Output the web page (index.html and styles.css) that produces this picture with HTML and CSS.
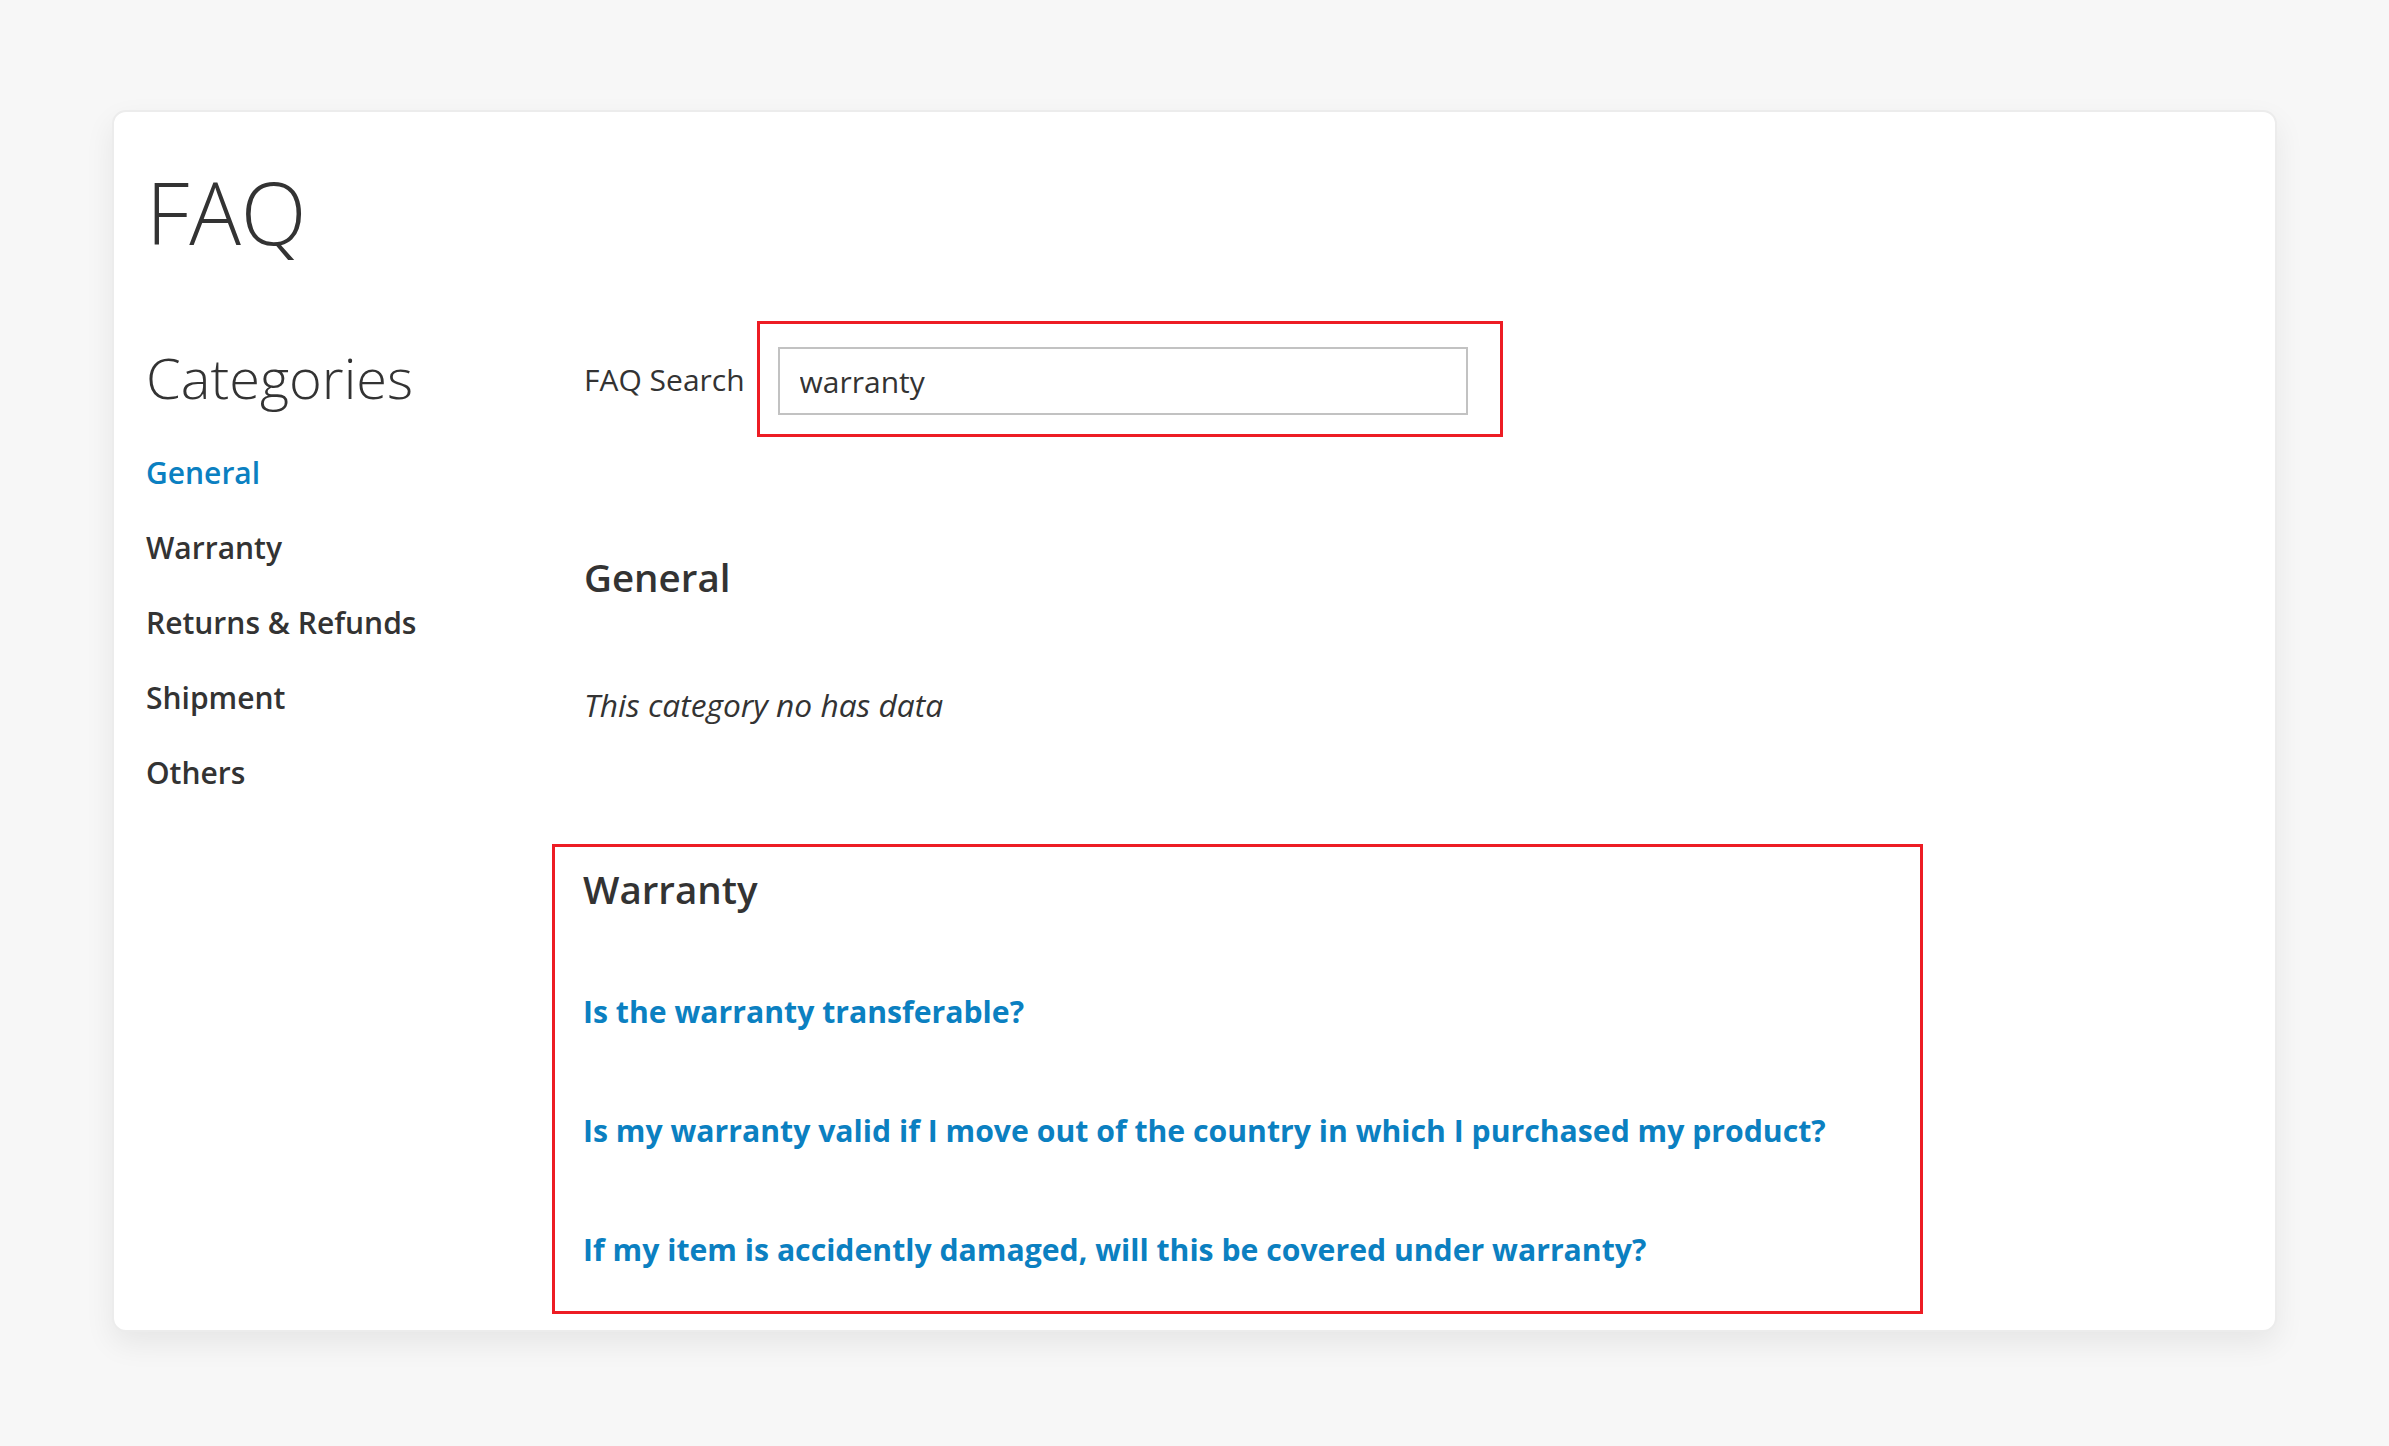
FILE: index.html
```html
<!DOCTYPE html>
<html lang="en">
<head>
  <meta charset="UTF-8">
  <meta name="viewport" content="width=device-width, initial-scale=1.0">
  <title>FAQ</title>
  <link rel="stylesheet" href="styles.css">
</head>
<body>

  <div class="faq-page">
    <h1 class="page-title">FAQ</h1>

    <div class="faq-layout">
      <!-- Sidebar with the category list -->
      <div class="faq-sidebar">
        <h2>Categories</h2>
        <ul class="category-list">
          <li><a class="active" href="#general">General</a></li>
          <li><a href="#warranty">Warranty</a></li>
          <li><a href="#returns">Returns &amp; Refunds</a></li>
          <li><a href="#shipment">Shipment</a></li>
          <li><a href="#others">Others</a></li>
        </ul>
      </div>

      <!-- Search and results -->
      <div class="faq-main">
        <div class="search-row">
          <label for="faqSearch">FAQ Search</label>
          <div class="highlight search-box">
            <input type="text" id="faqSearch" value="warranty">
          </div>
        </div>

        <div class="faq-category" id="general">
          <h3>General</h3>
          <p class="empty">This category no has data</p>
        </div>

        <div class="highlight faq-category results" id="warranty">
          <h3>Warranty</h3>
          <a class="question" href="#">Is the warranty transferable?</a>
          <a class="question" href="#">Is my warranty valid if I move out of the country in which I purchased my product?</a>
          <a class="question" href="#">If my item is accidently damaged, will this be covered under warranty?</a>
        </div>
      </div>
    </div>
  </div>

</body>
</html>
```

FILE: styles.css
```css
body {
  margin: 0;
  padding: 110px 112px 114px;
  background-color: #f7f7f7;
  font-family: "Open Sans", "Liberation Sans", sans-serif;
  color: #333;
}

.faq-page {
  background: white;
  border: 2px solid #ececec;
  border-radius: 14px;
  box-shadow: 0 12px 30px rgba(0, 0, 0, 0.07);
  padding: 53px 32px 16px;
  min-height: 1149px;
}

.page-title {
  margin: 0 0 61px;
  font-size: 86px;
  font-weight: 300;
  line-height: 94.6px;
}

.faq-layout {
  display: flex;
}

.faq-sidebar {
  width: 438px;
  flex-shrink: 0;
  padding-top: 23px;
}

.faq-sidebar h2 {
  margin: 0 0 41px;
  font-size: 56px;
  font-weight: 300;
  line-height: 67px;
}

.category-list {
  list-style: none;
  margin: 0;
  padding: 0;
}

.category-list li {
  margin-bottom: 33px;
}

.category-list a {
  display: block;
  color: #333;
  text-decoration: none;
  font-size: 30px;
  font-weight: 600;
  line-height: 42px;
}

.category-list a.active {
  color: #0b80c1;
}

.faq-main {
  flex: 1;
}

.search-row {
  display: flex;
  align-items: center;
  gap: 12px;
}

.search-row label {
  font-size: 30px;
  line-height: 42px;
  padding-top: 3px;
}

.highlight {
  border: 3px solid #ed1c24;
}

.search-box {
  padding: 23px 32px 19px 18px;
}

.search-box input {
  display: block;
  box-sizing: border-box;
  width: 690px;
  height: 68px;
  margin: 0;
  padding: 2px 20px 0;
  border: 2px solid #c2c2c2;
  font-family: inherit;
  font-size: 30px;
  color: #333;
  outline: none;
}

.faq-category h3 {
  margin: 0;
  font-size: 38.5px;
  font-weight: 600;
  line-height: 46px;
}

#general {
  margin-top: 117px;
}

.empty {
  margin: 84px 0 0;
  font-size: 31.7px;
  font-style: italic;
  line-height: 42px;
}

.results {
  width: 1331px;
  margin: 118px 0 0 -32px;
  padding: 19px 6px 40px 28px;
}

.question {
  display: block;
  margin-top: 77px;
  color: #0b80c1;
  text-decoration: none;
  font-size: 30.2px;
  font-weight: 700;
  line-height: 42px;
}

.results h3 + .question {
  margin-top: 79px;
}
```
